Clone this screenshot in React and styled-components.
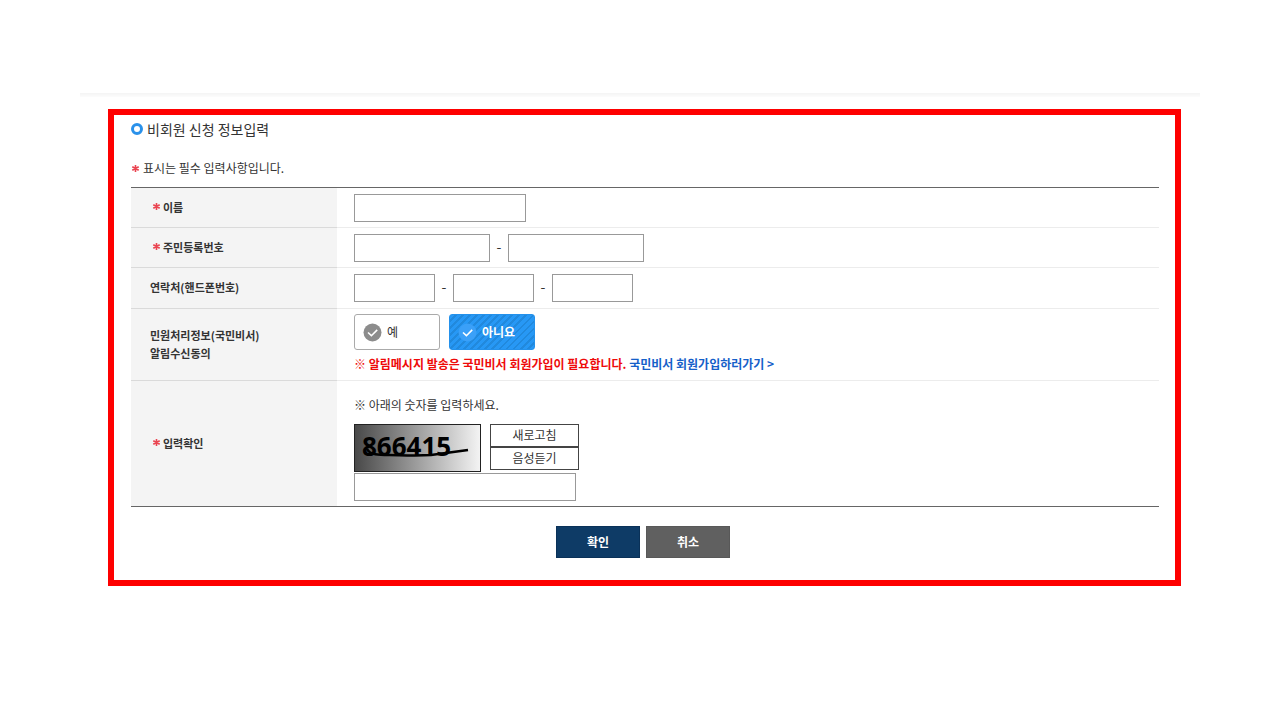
import React, { useState } from "react";
import styled, { createGlobalStyle, css } from "styled-components";

const GlobalStyle = createGlobalStyle`
  * { box-sizing: border-box; }
  body {
    margin: 0;
    background: #fff;
    color: #333;
    font-family: "Noto Sans CJK KR", "Noto Sans", sans-serif;
    font-size: 12px;
    line-height: 20px;
  }
  button, input { font: inherit; color: inherit; }
`;

const Page = styled.main`
  padding: 93px 80px 40px;
`;

const TopRule = styled.div`
  height: 4px;
  background: linear-gradient(#f4f4f4, #fcfcfc);
`;

const Frame = styled.form`
  margin: 12px 19px 0 28px;
  padding: 0 16px 22px 17px;
  border: 6px solid #fe0000;
`;

const Title = styled.h1`
  display: flex;
  align-items: center;
  gap: 4px;
  margin: 0;
  font-size: 14px;
  font-weight: 400;
  line-height: 28px;
`;

const Bullet = styled.span`
  width: 12px;
  height: 12px;
  border: 3px solid #2a91ea;
  border-radius: 50%;
`;

const Notice = styled.p`
  display: flex;
  align-items: center;
  gap: 3px;
  margin: 15px 0 9px;
`;

const Star = styled.svg`
  width: 9px;
  height: 9px;
  flex: none;
`;

const FormTable = styled.table`
  width: 100%;
  table-layout: fixed;
  border-spacing: 0;
  border-top: 1px solid #666;
  border-bottom: 1px solid #666;
`;

const HeadCell = styled.th`
  width: 206px;
  padding: 0 19px 2px;
  background: #f4f4f4;
  border-bottom: 1px solid #dadada;
  font-size: 11px;
  font-weight: 700;
  line-height: 18px;
  text-align: left;
  tr:last-child > & { border-bottom: 0; }
`;

const HeadLabel = styled.label`
  display: flex;
  align-items: center;
  gap: 2px;
  padding-left: ${(p) => (p.$required ? "2px" : "0")};
`;

const Cell = styled.td`
  padding: 6px 17px 5px;
  border-bottom: 1px solid #ececec;
  tr:nth-child(3) > & { padding-bottom: 6px; }
  tr:nth-child(4) > & { padding-top: 5px; padding-bottom: 6px; }
  tr:last-child > & { padding-top: 14px; border-bottom: 0; }
`;

const Fields = styled.div`
  display: flex;
  align-items: center;
`;

const sizes = { short: "81px", medium: "136px", long: "172px", wide: "222px" };

const TextBox = styled.input`
  display: block;
  width: ${(p) => sizes[p.$size]};
  height: 28px;
  padding: 0 6px;
  border: 1px solid #999;
  border-radius: 0;
  background: #fff;
`;

const Dash = styled.span`
  width: 18px;
  padding-bottom: 4px;
  font-size: 14px;
  text-align: center;
`;

const Options = styled.div`
  display: flex;
  gap: 9px;
  margin-bottom: 4px;
`;

const Option = styled.label`
  display: flex;
  align-items: center;
  gap: 4px;
  width: 86px;
  height: 36px;
  padding: 0 8px;
  border: 1px solid #aaa;
  border-radius: 3px;
  cursor: pointer;
  ${(p) =>
    p.$on &&
    css`
      border-color: #2491eb;
      color: #fff;
      font-weight: 700;
      background: repeating-linear-gradient(135deg, #2798f5 0 3px, #2189dd 3px 5px);
    `}
`;

const Radio = styled.input`
  appearance: none;
  position: absolute;
  width: 1px;
  height: 1px;
  margin: 0;
  opacity: 0;
`;

const Warning = styled.p`
  margin: 0;
  color: #ee0a0a;
  font-weight: 700;
`;

const JoinLink = styled.a`
  color: #1560c9;
  text-decoration: none;
`;

const CaptchaHint = styled.p`
  margin: 0 0 9px;
`;

const CaptchaRow = styled.div`
  display: flex;
  gap: 9px;
  margin-bottom: 1px;
`;

const CaptchaImage = styled.svg`
  width: 127px;
  height: 48px;
`;

const CaptchaActions = styled.div`
  display: flex;
  flex-direction: column;
`;

const SmallButton = styled.button`
  width: 89px;
  height: 23px;
  padding: 0 0 2px;
  border: 1px solid #444;
  background: #fff;
  line-height: 18px;
`;

const Actions = styled.div`
  display: flex;
  justify-content: center;
  gap: 6px;
  margin-top: 19px;
  padding-right: 4px;
`;

const ActionButton = styled.button`
  width: 84px;
  height: 32px;
  padding: 0;
  border: 1px solid ${(p) => (p.$primary ? "#0a3158" : "#585858")};
  background: ${(p) => (p.$primary ? "#0e3b66" : "#606060")};
  color: #fff;
  font-weight: 700;
`;

function RequiredMark() {
  return (
    <Star viewBox="0 0 9 9" role="img" aria-label="필수">
      <path d="M4.5 1v7M1.3 2.7l6.4 3.6M7.7 2.7l-6.4 3.6" stroke="#ea4450" strokeWidth="1.6" />
    </Star>
  );
}

function CheckMark({ on }) {
  return (
    <svg width="20" height="20" viewBox="0 0 20 20" aria-hidden="true">
      <circle cx="9.5" cy="10.5" r="9" fill={on ? "#3ba0f8" : "#8c8c8c"} />
      <path d="M5 10.5l3.4 3.2 5.8-5.8" fill="none" stroke="#fff" strokeWidth="1.6" />
    </svg>
  );
}

function Row({ label, htmlFor, required, children }) {
  return (
    <tr>
      <HeadCell scope="row">
        <HeadLabel htmlFor={htmlFor} $required={required}>
          {required && <RequiredMark />}
          <span>{label}</span>
        </HeadLabel>
      </HeadCell>
      <Cell>{children}</Cell>
    </tr>
  );
}

export default function App() {
  const [consent, setConsent] = useState("no");
  const choices = [
    { value: "yes", text: "예" },
    { value: "no", text: "아니요" },
  ];

  return (
    <>
      <GlobalStyle />
      <Page>
        <TopRule />
        <Frame onSubmit={(e) => e.preventDefault()}>
          <Title>
            <Bullet />
            비회원 신청 정보입력
          </Title>
          <Notice>
            <RequiredMark />
            표시는 필수 입력사항입니다.
          </Notice>
          <FormTable>
            <tbody>
              <Row label="이름" htmlFor="name" required>
                <TextBox id="name" $size="long" />
              </Row>
              <Row label="주민등록번호" htmlFor="rrn1" required>
                <Fields>
                  <TextBox id="rrn1" $size="medium" />
                  <Dash>-</Dash>
                  <TextBox aria-label="주민등록번호 뒷자리" type="password" $size="medium" />
                </Fields>
              </Row>
              <Row label="연락처(핸드폰번호)" htmlFor="tel1">
                <Fields>
                  <TextBox id="tel1" $size="short" />
                  <Dash>-</Dash>
                  <TextBox aria-label="연락처 가운데 자리" $size="short" />
                  <Dash>-</Dash>
                  <TextBox aria-label="연락처 끝자리" $size="short" />
                </Fields>
              </Row>
              <Row
                htmlFor="consent-yes"
                label={
                  <>
                    민원처리정보(국민비서)
                    <br />
                    알림수신동의
                  </>
                }
              >
                <Options>
                  {choices.map((c) => (
                    <Option key={c.value} $on={consent === c.value}>
                      <Radio
                        type="radio"
                        name="consent"
                        id={`consent-${c.value}`}
                        checked={consent === c.value}
                        onChange={() => setConsent(c.value)}
                      />
                      <CheckMark on={consent === c.value} />
                      {c.text}
                    </Option>
                  ))}
                </Options>
                <Warning>
                  ※ 알림메시지 발송은 국민비서 회원가입이 필요합니다.{" "}
                  <JoinLink href="#join">국민비서 회원가입하러가기 &gt;</JoinLink>
                </Warning>
              </Row>
              <Row label="입력확인" htmlFor="captcha" required>
                <CaptchaHint>※ 아래의 숫자를 입력하세요.</CaptchaHint>
                <CaptchaRow>
                  <CaptchaImage viewBox="0 0 127 48" role="img" aria-label="866415">
                    <defs>
                      <linearGradient id="shade">
                        <stop offset="0" stopColor="#484848" />
                        <stop offset="1" stopColor="#f4f4f4" />
                      </linearGradient>
                    </defs>
                    <rect x="0.5" y="0.5" width="126" height="47" fill="url(#shade)" stroke="#222" />
                    <text
                      x="8"
                      y="32"
                      fill="#000"
                      fontFamily="'Open Sans', sans-serif"
                      fontWeight="700"
                      fontSize="26"
                    >
                      866415
                    </text>
                    <path
                      d="M13 25c3 6 12 6 22 6s25 1 42 0l37-5"
                      fill="none"
                      stroke="#000"
                      strokeWidth="2.5"
                    />
                  </CaptchaImage>
                  <CaptchaActions>
                    <SmallButton type="button">새로고침</SmallButton>
                    <SmallButton type="button">음성듣기</SmallButton>
                  </CaptchaActions>
                </CaptchaRow>
                <TextBox id="captcha" $size="wide" />
              </Row>
            </tbody>
          </FormTable>
          <Actions>
            <ActionButton type="submit" $primary>
              확인
            </ActionButton>
            <ActionButton type="button">취소</ActionButton>
          </Actions>
        </Frame>
      </Page>
    </>
  );
}
